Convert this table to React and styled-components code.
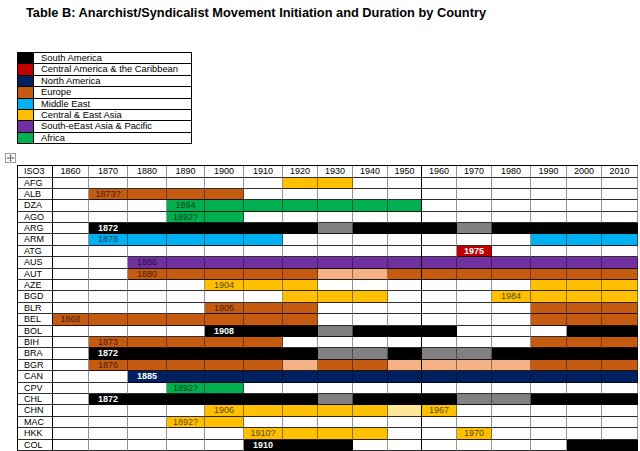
import React from "react";
import styled, { createGlobalStyle } from "styled-components";

const Global = createGlobalStyle`
  html, body { margin: 0; padding: 0; background: #fff; overflow: hidden; }
  body { font-family: "Liberation Sans", Arial, sans-serif; color: #000; }
`;

const COLORS = {
  ".": "#ffffff",
  K: "#000000",
  R: "#c00000",
  N: "#002060",
  O: "#c55a11",
  B: "#00b0f0",
  Y: "#ffc000",
  P: "#7030a0",
  G: "#00b050",
  g: "#808080",
  s: "#f4b183",
  y: "#ffe699",
};

const DARK = { K: true, R: true, N: true };

const LEGEND = [
  ["K", "South America"],
  ["R", "Central America & the Caribbean"],
  ["N", "North America"],
  ["O", "Europe"],
  ["B", "Middle East"],
  ["Y", "Central & East Asia"],
  ["P", "South-eEast Asia & Pacific"],
  ["G", "Africa"],
];

const YEARS = ["1860","1870","1880","1890","1900","1910","1920","1930","1940","1950","1960","1970","1980","1990","2000","2010"];
const WIDTHS = [35, 36, 39, 39, 38, 39, 39, 35, 35, 35, 34, 35, 35, 39, 36, 35, 36];

const ROWS = [
  ["AFG", "......YY........", {}],
  ["ALB", ".OOOO...........", { 1: "1873?" }],
  ["DZA", "...GGGGGGG......", { 3: "1894" }],
  ["AGO", "...GG...........", { 3: "1892?" }],
  ["ARG", ".KKKKKKgKKKgKKKK", { 1: "1872" }],
  ["ARM", ".BBBBB.......BBB", { 1: "1878" }],
  ["ATG", "...........R....", { 11: "1975" }],
  ["AUS", "..PPPPPPPPPPPPPP", { 2: "1886" }],
  ["AUT", "..OOOOOssOOOOOOO", { 2: "1880" }],
  ["AZE", "....YYY......YYY", { 4: "1904" }],
  ["BGD", "......YYY...YYYY", { 12: "1984" }],
  ["BLR", "....OOO......OOO", { 4: "1905" }],
  ["BEL", "OOOOOOO......OOO", { 0: "1868" }],
  ["BOL", "....KKKgKKK...KK", { 4: "1908" }],
  ["BIH", ".OOOOO.......OOO", { 1: "1873" }],
  ["BRA", ".KKKKKKggKggKKKK", { 1: "1872" }],
  ["BGR", ".OOOOOsOOssssOOO", { 1: "1876" }],
  ["CAN", "..NNNNNNNNNNNNNN", { 2: "1885" }],
  ["CPV", "...GG...........", { 3: "1892?" }],
  ["CHL", ".KKKKKKgKKKggKKK", { 1: "1872" }],
  ["CHN", "....YYYYYyY.....", { 4: "1906", 10: "1967" }],
  ["MAC", "...YY...........", { 3: "1892?" }],
  ["HKK", ".....YYYY..Y....", { 5: "1910?", 11: "1970" }],
  ["COL", ".....KKK......KK", { 5: "1910" }],
];

const Page = styled.div`
  padding: 0 0 0 5px;
  width: 640px;
  height: 451px;
  box-sizing: border-box;
`;

const Title = styled.h1`
  margin: 0 0 0 21px;
  padding-top: 5px;
  font-size: 12.8px;
  line-height: 16px;
  font-weight: bold;
  white-space: nowrap;
`;

const Legend = styled.div`
  margin: 31px 0 0 12px;
  width: 175px;
  display: grid;
  grid-template-columns: 16px 1fr;
  grid-auto-rows: 11.4px;
  border: 1px solid #000;
  border-bottom: none;
  box-sizing: border-box;
`;

const Swatch = styled.div`
  background: ${(p) => p.$color};
  border-right: 1px solid #000;
  border-bottom: 1px solid #000;
`;

const LegendLabel = styled.div`
  font-size: 9.4px;
  line-height: 10.4px;
  padding-left: 7px;
  border-bottom: 1px solid #000;
  white-space: nowrap;
  color: #000;
`;

const MoveHandle = styled.div`
  margin-top: 9px;
  width: 11px;
  height: 10px;
  display: flex;
`;

const Grid = styled.div`
  margin: 2px 0 0 12px;
  display: grid;
  grid-template-columns: ${WIDTHS.map((w) => w + "px").join(" ")};
  grid-auto-rows: 11.4px;
  border-top: 1px solid #000;
  border-left: 1px solid #000;
  width: max-content;
`;

const Cell = styled.div`
  box-sizing: border-box;
  background: ${(p) => p.$bg || "#fff"};
  border-right: 1px solid ${(p) => (p.$strong ? "#000" : "rgba(0,0,0,0.42)")};
  border-bottom: 1px solid rgba(0,0,0,0.82);
  font-size: 9px;
  line-height: 10.4px;
  text-align: center;
  white-space: nowrap;
  overflow: visible;
  color: ${(p) => (p.$dark ? "#fff" : p.$tint ? "rgba(0,0,0,0.7)" : "#000")};
  font-weight: ${(p) => (p.$dark ? "bold" : "normal")};
`;

const CodeCell = styled(Cell)`
  text-align: left;
  padding-left: 6px;
  border-right-color: #000;
`;

function MoveIcon() {
  return (
    <svg width="11" height="10" viewBox="0 0 11 10">
      <rect x="0.5" y="0.5" width="10" height="9" fill="#fff" stroke="#9a9a9a" />
      <g stroke="#555" strokeWidth="0.8" fill="none">
        <line x1="5.5" y1="2" x2="5.5" y2="8" />
        <line x1="2.5" y1="5" x2="8.5" y2="5" />
      </g>
      <g fill="#555">
        <path d="M5.5 1.5 L4.3 2.9 L6.7 2.9 Z" />
        <path d="M5.5 8.5 L4.3 7.1 L6.7 7.1 Z" />
        <path d="M2 5 L3.4 3.8 L3.4 6.2 Z" />
        <path d="M9 5 L7.6 3.8 L7.6 6.2 Z" />
      </g>
    </svg>
  );
}

export default function App() {
  return (
    <Page>
      <Global />
      <Title>Table B: Anarchist/Syndicalist Movement Initiation and Duration by Country</Title>
      <Legend>
        {LEGEND.map(([k, label]) => (
          <React.Fragment key={k}>
            <Swatch $color={COLORS[k]} />
            <LegendLabel>{label}</LegendLabel>
          </React.Fragment>
        ))}
      </Legend>
      <MoveHandle>
        <MoveIcon />
      </MoveHandle>
      <Grid>
        <CodeCell>ISO3</CodeCell>
        {YEARS.map((y, i) => (
          <Cell key={y} $strong={i === 9}>{y}</Cell>
        ))}
        {ROWS.map(([code, pattern, labels]) => (
          <React.Fragment key={code}>
            <CodeCell>{code}</CodeCell>
            {pattern.split("").map((c, i) => (
              <Cell
                key={i}
                $bg={COLORS[c]}
                $dark={!!DARK[c]}
                $tint={c !== "."}
                $strong={i === 9}
              >
                {labels[i] || ""}
              </Cell>
            ))}
          </React.Fragment>
        ))}
      </Grid>
    </Page>
  );
}
